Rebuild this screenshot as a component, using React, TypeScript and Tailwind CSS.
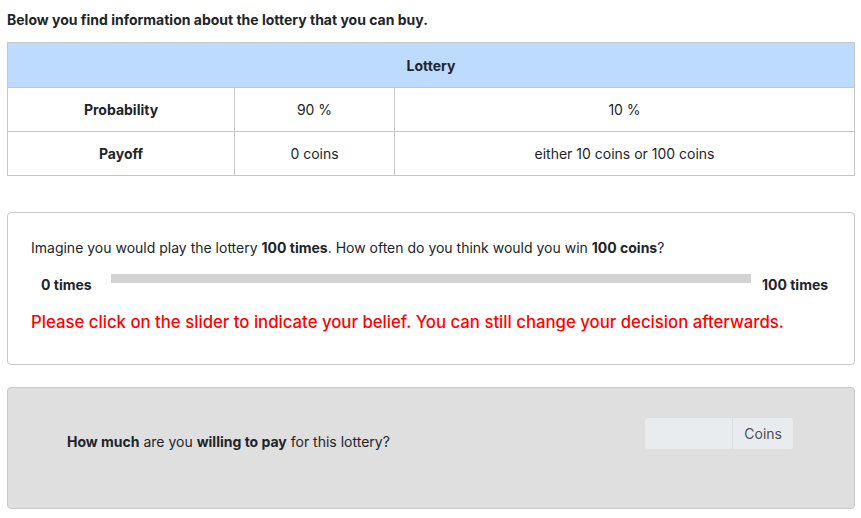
import React from "react";

function LotteryTable() {
  return (
    <table className="w-full border-collapse text-[14px] text-[#212529]">
      <thead>
        <tr className="h-[45px] bg-[#bddbfd]">
          <th colSpan={3} className="border border-[#c6c6c6] font-bold">
            Lottery
          </th>
        </tr>
      </thead>
      <tbody>
        <tr className="h-[44px]">
          <th className="w-[227px] border border-[#c6c6c6] font-bold">Probability</th>
          <td className="w-[160px] border border-[#c6c6c6] text-center">90 %</td>
          <td className="border border-[#c6c6c6] text-center">10 %</td>
        </tr>
        <tr className="h-[44px]">
          <th className="border border-[#c6c6c6] font-bold">Payoff</th>
          <td className="border border-[#c6c6c6] text-center">0 coins</td>
          <td className="border border-[#c6c6c6] text-center">either 10 coins or 100 coins</td>
        </tr>
      </tbody>
    </table>
  );
}

function BeliefCard() {
  return (
    <div className="mt-[36px] rounded border border-[#c9c9c9] px-[23px] pt-[24px] pb-[29px]">
      <p className="text-[14px] text-[#212529]">
        Imagine you would play the lottery <b>100 times</b>. How often do you think would you win{" "}
        <b>100 coins</b>?
      </p>
      <div className="mt-[15px] flex items-start">
        <span className="w-[80px] pt-[1px] pl-[10px] text-[14px] font-bold text-[#212529]">0 times</span>
        <div className="mt-[1px] h-[9px] w-[640px] bg-[#d3d3d3]" />
        <span className="pt-[1px] pl-[11px] text-[14px] font-bold text-[#212529]">100 times</span>
      </div>
      <p className="mt-[15px] text-[16.75px] font-medium text-[#ff0000]">
        Please click on the slider to indicate your belief. You can still change your decision afterwards.
      </p>
    </div>
  );
}

function PayCard() {
  return (
    <div className="mt-[22px] flex h-[122px] items-start justify-between rounded border border-[#c9c9c9] bg-[#dfdfdf] pt-[29px] pr-[60px] pl-[59px]">
      <p className="mt-[14px] text-[14px] text-[#212529]">
        <b>How much</b> are you <b>willing to pay</b> for this lottery?
      </p>
      <div className="flex h-[33px] text-[14px]">
        <input
          disabled
          className="w-[89px] rounded-l border border-[#dcdfe2] bg-[#e9ecef]"
        />
        <span className="flex items-center rounded-r border border-l-0 border-[#dcdfe2] bg-[#e9ecef] px-[11px] text-[#495057]">
          Coins
        </span>
      </div>
    </div>
  );
}

export default function App() {
  return (
    <div className="min-h-[518px] bg-white pt-[9px] pr-[6px] pl-[7px] font-['Inter','Liberation_Sans',sans-serif]">
      <p className="text-[14px] font-bold text-[#212529]">
        Below you find information about the lottery that you can buy.
      </p>
      <div className="mt-[12px]">
        <LotteryTable />
      </div>
      <BeliefCard />
      <PayCard />
    </div>
  );
}
